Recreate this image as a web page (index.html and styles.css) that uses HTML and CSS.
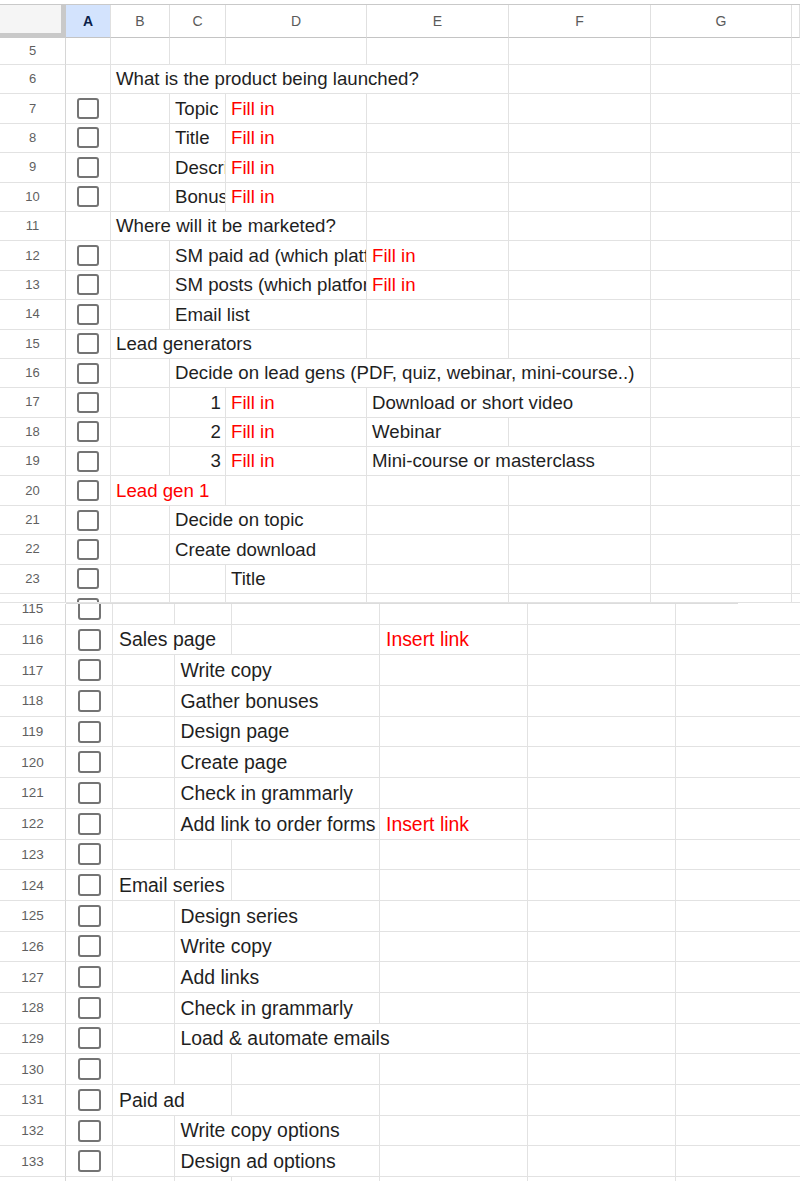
FILE: index.html
```html
<!DOCTYPE html>
<html lang="en">
<head>
<meta charset="utf-8">
<title>Launch checklist</title>
<link rel="stylesheet" href="styles.css">
</head>
<body>
<div class="top">
  <div class="row head">
    <div class="c corner"></div>
    <div class="c hc sel">A</div>
    <div class="c hc">B</div>
    <div class="c hc">C</div>
    <div class="c hc">D</div>
    <div class="c hc">E</div>
    <div class="c hc">F</div>
    <div class="c hc">G</div>
    <div class="c hc"></div>
  </div>
  <div class="row r5">
    <div class="c num">5</div><div class="c"></div><div class="c"></div><div class="c"></div><div class="c"></div><div class="c"></div><div class="c"></div><div class="c"></div><div class="c"></div>
  </div>
  <div class="row">
    <div class="c num">6</div><div class="c"></div><div class="c s4">What is the product being launched?</div><div class="c"></div><div class="c"></div><div class="c"></div>
  </div>
  <div class="row">
    <div class="c num">7</div><div class="c cbc"><span class="cb"></span></div><div class="c"></div><div class="c">Topic</div><div class="c red">Fill in</div><div class="c"></div><div class="c"></div><div class="c"></div><div class="c"></div>
  </div>
  <div class="row">
    <div class="c num">8</div><div class="c cbc"><span class="cb"></span></div><div class="c"></div><div class="c">Title</div><div class="c red">Fill in</div><div class="c"></div><div class="c"></div><div class="c"></div><div class="c"></div>
  </div>
  <div class="row">
    <div class="c num">9</div><div class="c cbc"><span class="cb"></span></div><div class="c"></div><div class="c">Description</div><div class="c red">Fill in</div><div class="c"></div><div class="c"></div><div class="c"></div><div class="c"></div>
  </div>
  <div class="row">
    <div class="c num">10</div><div class="c cbc"><span class="cb"></span></div><div class="c"></div><div class="c">Bonuses</div><div class="c red">Fill in</div><div class="c"></div><div class="c"></div><div class="c"></div><div class="c"></div>
  </div>
  <div class="row">
    <div class="c num">11</div><div class="c"></div><div class="c s3">Where will it be marketed?</div><div class="c"></div><div class="c"></div><div class="c"></div><div class="c"></div>
  </div>
  <div class="row">
    <div class="c num">12</div><div class="c cbc"><span class="cb"></span></div><div class="c"></div><div class="c s2">SM paid ad (which platform)</div><div class="c red">Fill in</div><div class="c"></div><div class="c"></div><div class="c"></div>
  </div>
  <div class="row">
    <div class="c num">13</div><div class="c cbc"><span class="cb"></span></div><div class="c"></div><div class="c s2">SM posts (which platform)</div><div class="c red">Fill in</div><div class="c"></div><div class="c"></div><div class="c"></div>
  </div>
  <div class="row">
    <div class="c num">14</div><div class="c cbc"><span class="cb"></span></div><div class="c"></div><div class="c s2">Email list</div><div class="c"></div><div class="c"></div><div class="c"></div><div class="c"></div>
  </div>
  <div class="row">
    <div class="c num">15</div><div class="c cbc"><span class="cb"></span></div><div class="c s3">Lead generators</div><div class="c"></div><div class="c"></div><div class="c"></div><div class="c"></div>
  </div>
  <div class="row">
    <div class="c num">16</div><div class="c cbc"><span class="cb"></span></div><div class="c"></div><div class="c s4">Decide on lead gens (PDF, quiz, webinar, mini-course..)</div><div class="c"></div><div class="c"></div>
  </div>
  <div class="row">
    <div class="c num">17</div><div class="c cbc"><span class="cb"></span></div><div class="c"></div><div class="c right">1</div><div class="c red">Fill in</div><div class="c s2">Download or short video</div><div class="c"></div><div class="c"></div>
  </div>
  <div class="row">
    <div class="c num">18</div><div class="c cbc"><span class="cb"></span></div><div class="c"></div><div class="c right">2</div><div class="c red">Fill in</div><div class="c">Webinar</div><div class="c"></div><div class="c"></div><div class="c"></div>
  </div>
  <div class="row">
    <div class="c num">19</div><div class="c cbc"><span class="cb"></span></div><div class="c"></div><div class="c right">3</div><div class="c red">Fill in</div><div class="c s2">Mini-course or masterclass</div><div class="c"></div><div class="c"></div>
  </div>
  <div class="row">
    <div class="c num">20</div><div class="c cbc"><span class="cb"></span></div><div class="c s2 red">Lead gen 1</div><div class="c"></div><div class="c"></div><div class="c"></div><div class="c"></div><div class="c"></div>
  </div>
  <div class="row">
    <div class="c num">21</div><div class="c cbc"><span class="cb"></span></div><div class="c"></div><div class="c s2">Decide on topic</div><div class="c"></div><div class="c"></div><div class="c"></div><div class="c"></div>
  </div>
  <div class="row">
    <div class="c num">22</div><div class="c cbc"><span class="cb"></span></div><div class="c"></div><div class="c s2">Create download</div><div class="c"></div><div class="c"></div><div class="c"></div><div class="c"></div>
  </div>
  <div class="row">
    <div class="c num">23</div><div class="c cbc"><span class="cb"></span></div><div class="c"></div><div class="c"></div><div class="c">Title</div><div class="c"></div><div class="c"></div><div class="c"></div><div class="c"></div>
  </div>
  <div class="row">
    <div class="c num"></div><div class="c cbc"><span class="cb"></span></div><div class="c"></div><div class="c"></div><div class="c"></div><div class="c"></div><div class="c"></div><div class="c"></div><div class="c"></div>
  </div>
</div>

<div class="bot">
  <div class="edge"></div>
  <div class="rows">
    <div class="row first">
      <div class="c num">115</div><div class="c cbc"><span class="cb"></span></div><div class="c"></div><div class="c"></div><div class="c"></div><div class="c"></div><div class="c"></div><div class="c"></div>
    </div>
    <div class="row">
      <div class="c num">116</div><div class="c cbc"><span class="cb"></span></div><div class="c s2">Sales page</div><div class="c"></div><div class="c red">Insert link</div><div class="c"></div><div class="c"></div>
    </div>
    <div class="row">
      <div class="c num">117</div><div class="c cbc"><span class="cb"></span></div><div class="c"></div><div class="c s2">Write copy</div><div class="c"></div><div class="c"></div><div class="c"></div>
    </div>
    <div class="row">
      <div class="c num">118</div><div class="c cbc"><span class="cb"></span></div><div class="c"></div><div class="c s2">Gather bonuses</div><div class="c"></div><div class="c"></div><div class="c"></div>
    </div>
    <div class="row">
      <div class="c num">119</div><div class="c cbc"><span class="cb"></span></div><div class="c"></div><div class="c s2">Design page</div><div class="c"></div><div class="c"></div><div class="c"></div>
    </div>
    <div class="row">
      <div class="c num">120</div><div class="c cbc"><span class="cb"></span></div><div class="c"></div><div class="c s2">Create page</div><div class="c"></div><div class="c"></div><div class="c"></div>
    </div>
    <div class="row">
      <div class="c num">121</div><div class="c cbc"><span class="cb"></span></div><div class="c"></div><div class="c s2">Check in grammarly</div><div class="c"></div><div class="c"></div><div class="c"></div>
    </div>
    <div class="row">
      <div class="c num">122</div><div class="c cbc"><span class="cb"></span></div><div class="c"></div><div class="c s2">Add link to order forms</div><div class="c red">Insert link</div><div class="c"></div><div class="c"></div>
    </div>
    <div class="row">
      <div class="c num">123</div><div class="c cbc"><span class="cb"></span></div><div class="c"></div><div class="c"></div><div class="c"></div><div class="c"></div><div class="c"></div><div class="c"></div>
    </div>
    <div class="row">
      <div class="c num">124</div><div class="c cbc"><span class="cb"></span></div><div class="c s2">Email series</div><div class="c"></div><div class="c"></div><div class="c"></div><div class="c"></div>
    </div>
    <div class="row">
      <div class="c num">125</div><div class="c cbc"><span class="cb"></span></div><div class="c"></div><div class="c s2">Design series</div><div class="c"></div><div class="c"></div><div class="c"></div>
    </div>
    <div class="row">
      <div class="c num">126</div><div class="c cbc"><span class="cb"></span></div><div class="c"></div><div class="c s2">Write copy</div><div class="c"></div><div class="c"></div><div class="c"></div>
    </div>
    <div class="row">
      <div class="c num">127</div><div class="c cbc"><span class="cb"></span></div><div class="c"></div><div class="c s2">Add links</div><div class="c"></div><div class="c"></div><div class="c"></div>
    </div>
    <div class="row">
      <div class="c num">128</div><div class="c cbc"><span class="cb"></span></div><div class="c"></div><div class="c s2">Check in grammarly</div><div class="c"></div><div class="c"></div><div class="c"></div>
    </div>
    <div class="row">
      <div class="c num">129</div><div class="c cbc"><span class="cb"></span></div><div class="c"></div><div class="c s3">Load &amp; automate emails</div><div class="c"></div><div class="c"></div>
    </div>
    <div class="row">
      <div class="c num">130</div><div class="c cbc"><span class="cb"></span></div><div class="c"></div><div class="c"></div><div class="c"></div><div class="c"></div><div class="c"></div><div class="c"></div>
    </div>
    <div class="row">
      <div class="c num">131</div><div class="c cbc"><span class="cb"></span></div><div class="c s2">Paid ad</div><div class="c"></div><div class="c"></div><div class="c"></div><div class="c"></div>
    </div>
    <div class="row">
      <div class="c num">132</div><div class="c cbc"><span class="cb"></span></div><div class="c"></div><div class="c s2">Write copy options</div><div class="c"></div><div class="c"></div><div class="c"></div>
    </div>
    <div class="row">
      <div class="c num">133</div><div class="c cbc"><span class="cb"></span></div><div class="c"></div><div class="c s2">Design ad options</div><div class="c"></div><div class="c"></div><div class="c"></div>
    </div>
    <div class="row">
      <div class="c num"></div><div class="c cbc"><span class="cb"></span></div><div class="c"></div><div class="c"></div><div class="c"></div><div class="c"></div><div class="c"></div><div class="c"></div>
    </div>
  </div>
</div>
</body>
</html>
```
FILE: styles.css
```css
* { box-sizing: border-box; }

body {
  margin: 0;
  background: #ffffff;
  font-family: "Liberation Sans", Arial, sans-serif;
  color: #1f1f1f;
}

.row {
  display: grid;
}

.c {
  display: flex;
  align-items: flex-end;
  min-width: 0;
  overflow: hidden;
  white-space: nowrap;
  border-right: 1px solid #e2e2e2;
  border-bottom: 1px solid #e2e2e2;
}

.s2 { grid-column: span 2; }
.s3 { grid-column: span 3; }
.s4 { grid-column: span 4; }

.red { color: #ff0000; }
.right { justify-content: flex-end; }

.num {
  align-items: center;
  justify-content: center;
  color: #5f5f5f;
  border-right-color: #d6d6d6;
}

.cbc {
  align-items: center;
  justify-content: center;
}

.cb {
  flex: none;
  display: block;
  border: 2px solid #747474;
  border-radius: 3px;
}

/* ---------- top block (rows 5-24) ---------- */
.top {
  height: 603px;
  overflow: hidden;
  border-bottom: 1px solid #e2e2e2;
}

.top .row {
  grid-template-columns: 66px 45px 59px 56px 141px 142px 142px 141px 8px;
  height: 29.4px;
}

.top .row.r5 { height: 27px; }

.top .c {
  font-size: 18.67px;
  line-height: 22px;
  padding: 0 4px 3px 5px;
}

.top .num {
  font-size: 13px;
  padding: 0;
}

.top .cbc { padding: 0; }

.top .cb {
  width: 22px;
  height: 21px;
}

.top .row.head {
  margin-top: 4px;
  height: 34px;
  border-top: 1px solid #c9c9c9;
}

.head .hc {
  align-items: center;
  justify-content: center;
  padding: 0;
  font-size: 14px;
  line-height: 16px;
  color: #5a5a5a;
  border-bottom-color: #c4c4c4;
  border-right-color: #e0e0e0;
}

.head .sel {
  background: #d3e3fd;
  color: #0b1e4a;
  font-weight: bold;
}

.head .corner {
  background: #f5f5f5;
  border-right: 5px solid #c9c9c9;
  border-bottom: 5px solid #c9c9c9;
}

/* ---------- bottom block (rows 115-134) ---------- */
.bot {
  height: 578px;
  overflow: hidden;
}

.edge {
  margin-left: 66px;
  width: 672px;
  height: 1px;
  background: #dcdcdc;
}

.rows {
  height: 577px;
  overflow: hidden;
}

.bot .row {
  grid-template-columns: 66px 47px 61.5px 57.5px 148px 148px 148px 124px;
  height: 30.7px;
}

.bot .row.first { margin-top: -10px; }

.bot .c {
  font-size: 19.4px;
  line-height: 23px;
  padding: 0 4px 3px 6px;
}

.bot .c:last-child { border-right: none; }

.bot .num {
  font-size: 13.5px;
  padding: 0;
}

.bot .cbc { padding: 0; }

.bot .cb {
  width: 23px;
  height: 22px;
}
```
